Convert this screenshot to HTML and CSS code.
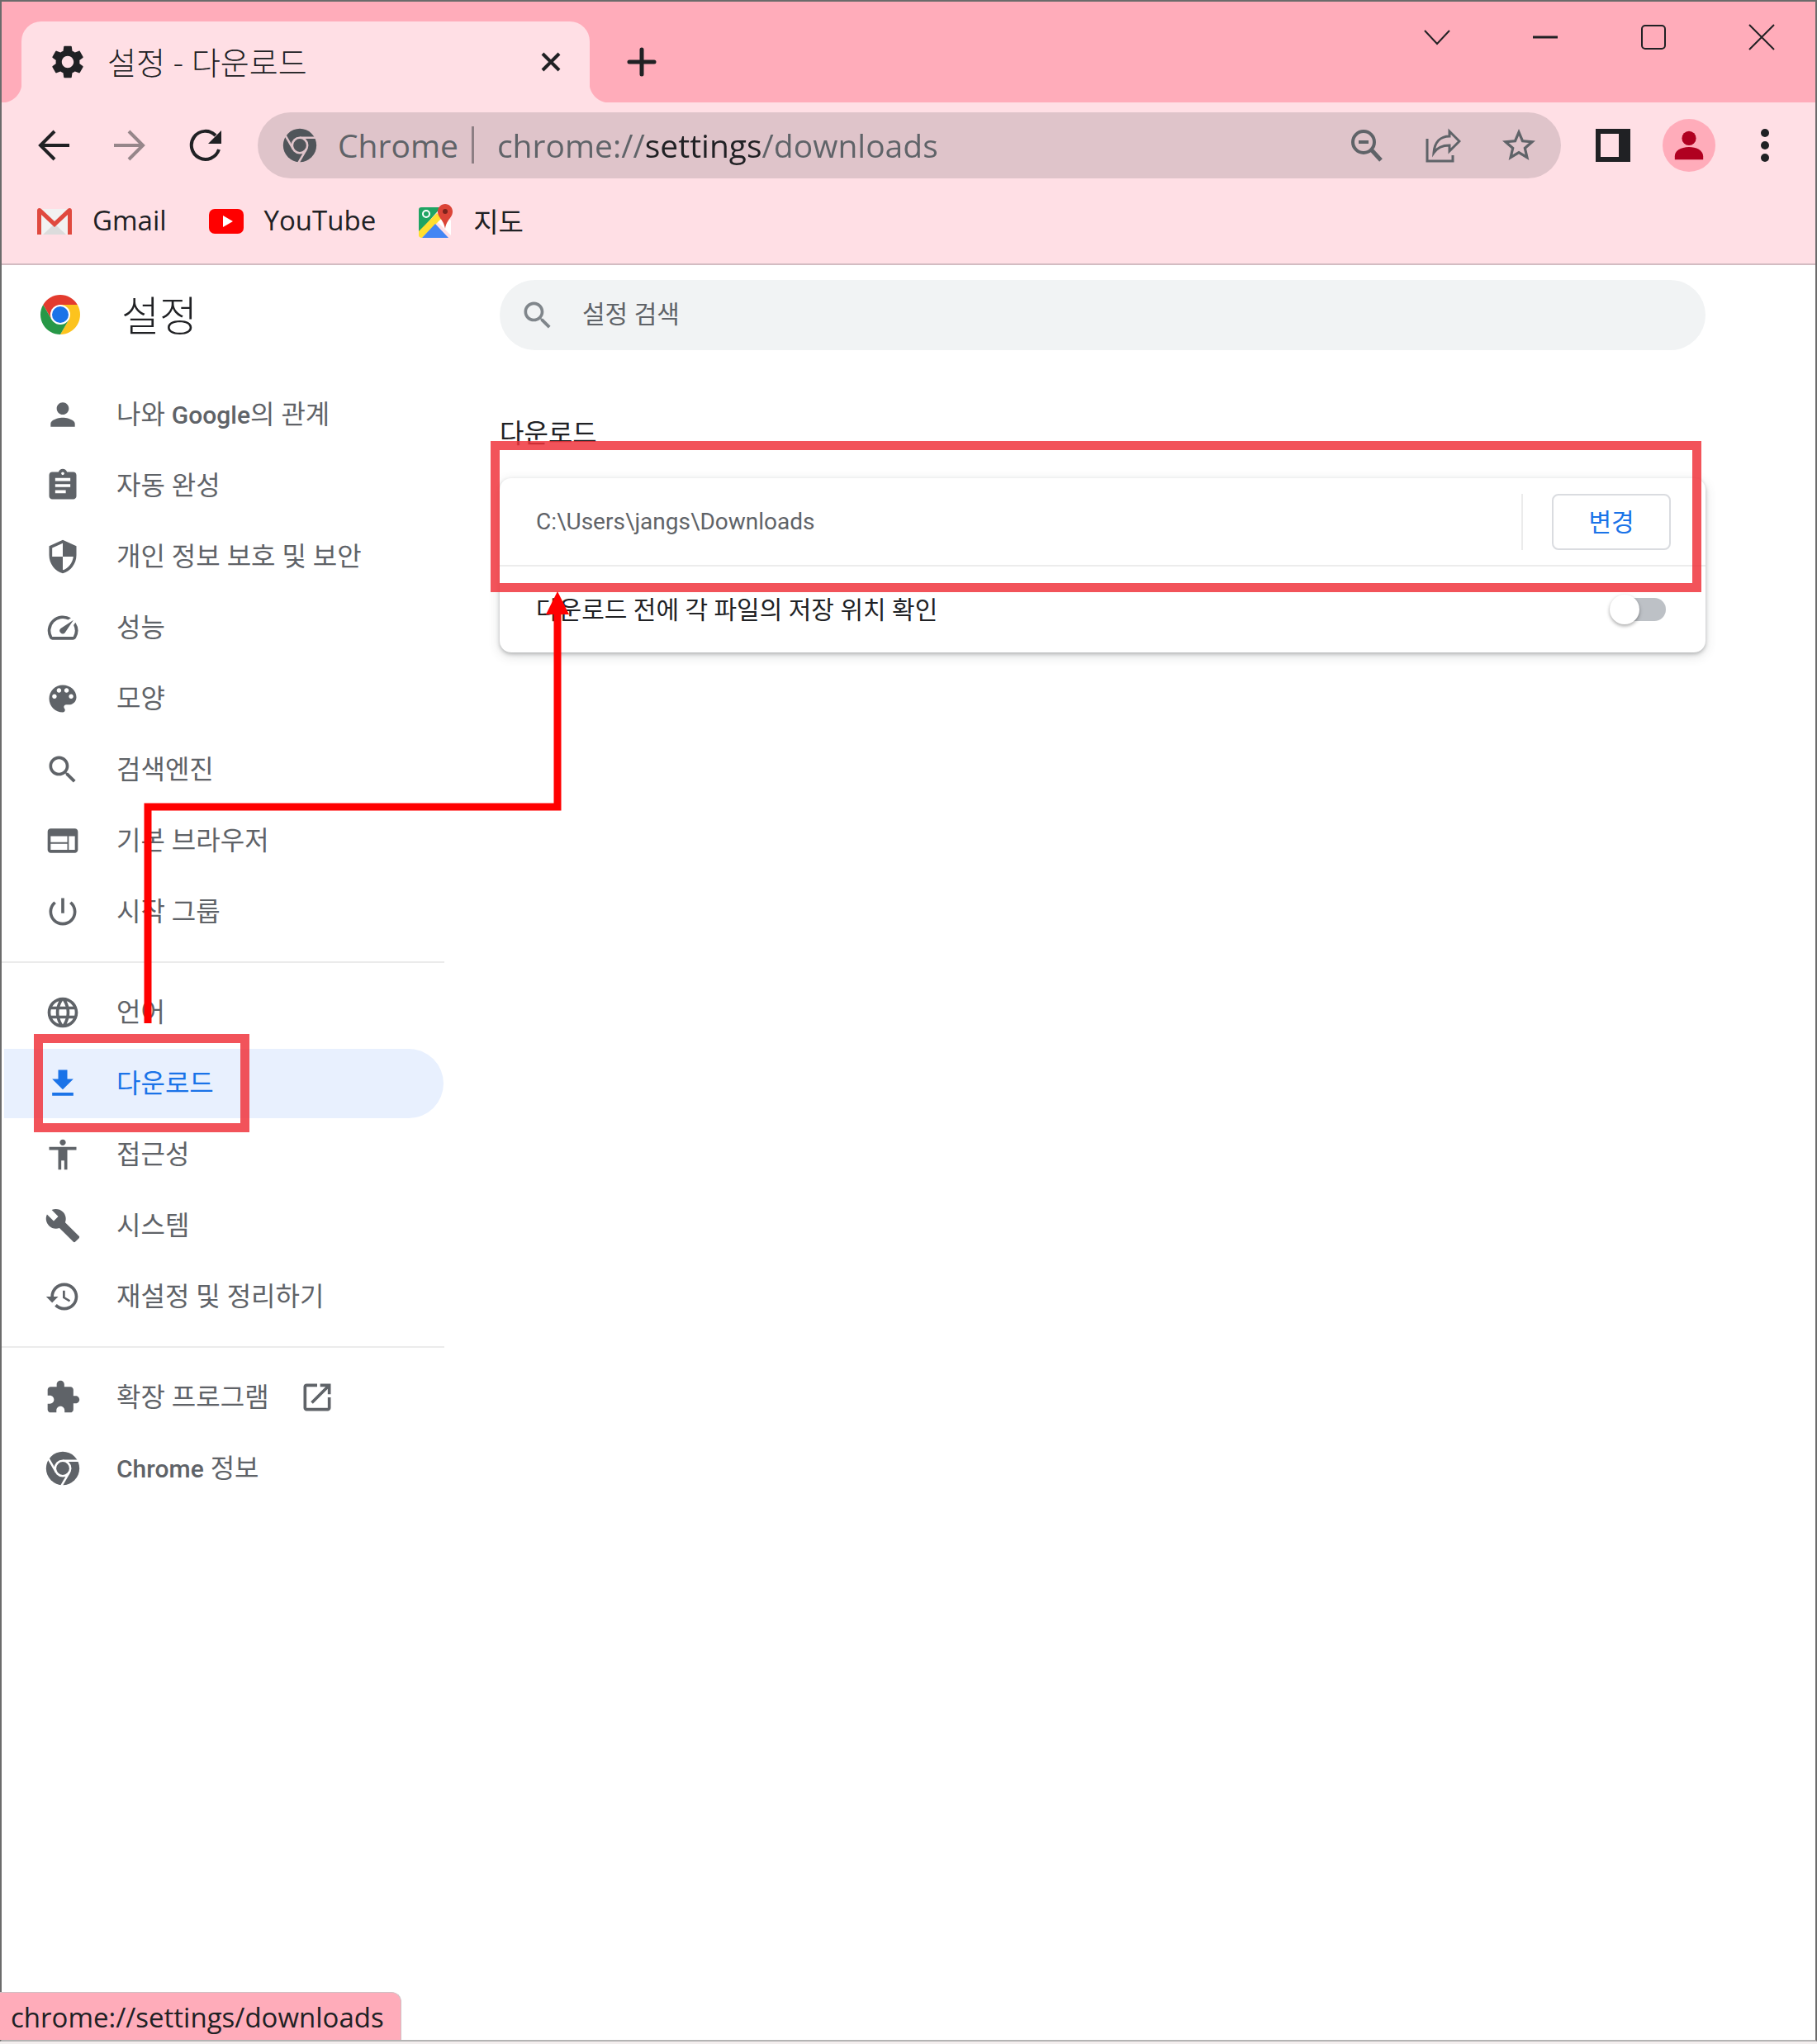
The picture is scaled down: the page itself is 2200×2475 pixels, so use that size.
FILE: index.html
```html
<!DOCTYPE html>
<html lang="ko">
<head>
    <meta charset="UTF-8">
    <meta name="viewport" content="width=device-width, initial-scale=1.0">
    <title>설정 - 다운로드</title>
    <link rel="stylesheet" href="styles.css">
</head>
<body>
<div class="window">
    <header class="browser">
        <div class="tabstrip">
            <div class="tab">
                <svg class="icon" viewBox="1 1 22 22"><path d="M19.14 12.94c.04-.3.06-.61.06-.94 0-.32-.02-.64-.07-.94l2.03-1.58c.18-.14.23-.41.12-.61l-1.92-3.32c-.12-.22-.37-.29-.59-.22l-2.39.96c-.5-.38-1.03-.7-1.62-.94l-.36-2.54c-.04-.24-.24-.41-.48-.41h-3.84c-.24 0-.43.17-.47.41l-.36 2.54c-.59.24-1.13.57-1.62.94l-2.39-.96c-.22-.08-.47 0-.59.22L2.74 8.87c-.12.21-.08.47.12.61l2.03 1.58c-.05.3-.09.63-.09.94s.02.64.07.94l-2.03 1.58c-.18.14-.23.41-.12.61l1.92 3.32c.12.22.37.29.59.22l2.39-.96c.5.38 1.03.7 1.62.94l.36 2.54c.05.24.24.41.48.41h3.84c.24 0 .44-.17.47-.41l.36-2.54c.59-.24 1.13-.56 1.62-.94l2.39.96c.22.08.47 0 .59-.22l1.92-3.32c.12-.22.07-.47-.12-.61l-2.01-1.58zM12 15.6c-1.98 0-3.6-1.62-3.6-3.6s1.62-3.6 3.6-3.6 3.6 1.62 3.6 3.6-1.62 3.6-3.6 3.6z"/></svg>
                <span class="tab-title">설정 - 다운로드</span>
                <button type="button" class="tab-close" aria-label="탭 닫기">
                    <svg class="icon line" viewBox="0 0 44 44" stroke-width="4"><path d="M12 12l20 20M32 12L12 32"/></svg>
                </button>
            </div>
            <button type="button" class="new-tab" aria-label="새 탭">
                <svg class="icon line" viewBox="0 0 44 44" stroke-width="5" stroke-linecap="round"><path d="M22 7v30M7 22h30"/></svg>
            </button>
            <div class="window-buttons">
                <button type="button" aria-label="탭 검색"><svg class="icon line" viewBox="0 0 44 44" stroke-width="2"><path d="M7 14l15 16 15-16"/></svg></button>
                <button type="button" aria-label="최소화"><svg class="icon line" viewBox="0 0 44 44" stroke-width="3"><path d="M7 22h30"/></svg></button>
                <button type="button" aria-label="최대화"><svg class="icon line" viewBox="0 0 44 44" stroke-width="2"><rect x="8" y="8" width="28" height="28" rx="4"/></svg></button>
                <button type="button" aria-label="닫기"><svg class="icon line" viewBox="0 0 44 44" stroke-width="2"><path d="M7 7l30 30M37 7L7 37"/></svg></button>
            </div>
        </div>

        <div class="toolbar">
            <button type="button" aria-label="뒤로"><svg class="icon line" viewBox="0 0 44 44" stroke-width="4"><path d="M41 22H6M23 5L6 22l17 17"/></svg></button>
            <button type="button" class="disabled" aria-label="앞으로"><svg class="icon line" viewBox="0 0 44 44" stroke-width="4"><path d="M3 22h35M21 5l17 17-17 17"/></svg></button>
            <button type="button" aria-label="새로고침"><svg class="icon line" viewBox="0 0 44 44" stroke-width="4"><path d="M38 27A17 17 0 1 1 34 10"/><path class="solid" d="M41 4v16H25z"/></svg></button>
            <div class="omnibox">
                <svg class="icon chrome-mono" viewBox="0 0 24 24"><circle cx="12" cy="12" r="11"/><circle class="cut" cx="12" cy="12" r="5"/><path class="cut" d="M12 7h10.4M7.67 14.5L2.5 5.5M16.33 14.5L11.1 23.5"/></svg>
                <label for="address">Chrome</label>
                <span class="omnibox-bar"></span>
                <input type="text" id="address" class="address" value="chrome://settings/downloads">
                <button type="button" aria-label="확대/축소"><svg class="icon line" viewBox="0 0 44 44" stroke-width="4"><circle cx="18" cy="18" r="13"/><path d="M12 18h12"/><path d="M28 28l11 12" stroke-width="5"/></svg></button>
                <button type="button" aria-label="공유"><svg class="icon line" viewBox="0 0 44 44" stroke-width="3"><path d="M3 14v27h31v-7"/><path d="M11 31c1-13 8-20 19-20V5l12 12-12 12v-7c-9 0-15 3-19 9z"/></svg></button>
                <button type="button" aria-label="북마크"><svg class="icon" viewBox="1 1 22 22"><path d="M22 9.24l-7.19-.62L12 2 9.19 8.63 2 9.24l5.46 4.73L5.82 21 12 17.27 18.18 21l-1.63-7.03L22 9.24zM12 15.4l-3.76 2.27 1-4.28-3.32-2.88 4.38-.38L12 6.1l1.71 4.04 4.38.38-3.32 2.88 1 4.28L12 15.4z"/></svg></button>
            </div>
            <button type="button" aria-label="측면 패널"><svg class="icon" viewBox="0 0 44 44"><path fill-rule="evenodd" d="M1 2h42v40H1zM7 8v28h22V8z"/></svg></button>
            <button type="button" aria-label="프로필"><span class="avatar"><svg class="icon" viewBox="0 0 44 44"><circle cx="22" cy="13" r="9"/><path d="M4 40v-4c0-8 9-12 18-12s18 4 18 12v4z"/></svg></span></button>
            <button type="button" aria-label="메뉴"><svg class="icon" viewBox="0 0 44 44"><circle cx="22" cy="7" r="5"/><circle cx="22" cy="22" r="5"/><circle cx="22" cy="37" r="5"/></svg></button>
        </div>

        <nav class="bookmarks">
            <a href="#gmail">
                <svg class="icon" viewBox="0 0 44 44"><path fill="#f2f2f2" d="M3 7h38v31H3z"/><path fill="#dcdcdc" d="M8 38l14-13 14 13z"/><path fill="#e04a3f" d="M1 9c0-3 3-4 5-2l16 15L38 7c2-2 5-1 5 2v29h-5V14L22 29 6 14v24H1z"/></svg>
                <span>Gmail</span></a>
            <a href="#youtube">
                <svg class="icon" viewBox="0 0 44 44"><rect fill="#f00" x="1" y="7" width="42" height="30" rx="7"/><path fill="#fff" d="M18 15l12 7-12 7z"/></svg>
                <span>YouTube</span></a>
            <a href="#maps">
                <svg class="icon" viewBox="0 0 44 44"><path fill="#1fa463" d="M5 5h24L2 36V8c0-2 1-3 3-3z"/><path fill="#fff" d="M36 16l5 5v18L24 22z"/><path fill="#ffdf30" d="M2 34L24 12l6 6L6 42c-2 0-4-1-4-3z"/><path fill="#4285f4" d="M6 42l16-17 16 17z"/><circle cx="11" cy="13" r="4" fill="none" stroke="#fff" stroke-width="2"/><path fill="#db4437" d="M34 1c5 0 9 4 9 9 0 8-7 9-9 21-2-12-9-13-9-21 0-5 4-9 9-9z"/><circle cx="34" cy="10" r="3" fill="#7b231c"/></svg>
                <span>지도</span></a>
        </nav>
    </header>

    <div class="settings">
        <aside class="sidebar">
            <h1>
                <svg class="logo" viewBox="0 0 24 24"><path fill="#e33b2e" d="M1.61 6A12 12 0 0 1 22.39 6H12L6.8 15z"/><path fill="#fcc31e" d="M22.39 6A12 12 0 0 1 12 24l5.2-9L12 6z"/><path fill="#279847" d="M12 24A12 12 0 0 1 1.61 6L6.8 15h10.4z"/><circle cx="12" cy="12" r="6" fill="#fff"/><circle cx="12" cy="12" r="5" fill="#1a73e8"/></svg>
                <span>설정</span>
            </h1>
            <nav>
                <ul>
                    <li><a href="#people"><svg class="icon" viewBox="0 0 24 24"><path d="M12 12c2.21 0 4-1.79 4-4s-1.79-4-4-4-4 1.79-4 4 1.79 4 4 4zm0 2c-2.67 0-8 1.34-8 4v2h16v-2c0-2.66-5.33-4-8-4z"/></svg><span>나와 <b>Google</b>의 관계</span></a></li>
                    <li><a href="#autofill"><svg class="icon" viewBox="0 0 24 24"><path d="M19 3h-4.18C14.4 1.84 13.3 1 12 1c-1.3 0-2.4.84-2.82 2H5c-1.1 0-2 .9-2 2v14c0 1.1.9 2 2 2h14c1.1 0 2-.9 2-2V5c0-1.1-.9-2-2-2zm-7 0c.55 0 1 .45 1 1s-.45 1-1 1-1-.45-1-1 .45-1 1-1zm2 14H7v-2h7v2zm3-4H7v-2h10v2zm0-4H7V7h10v2z"/></svg><span>자동 완성</span></a></li>
                    <li><a href="#privacy"><svg class="icon" viewBox="0 0 24 24"><path d="M12 1L3 5v6c0 5.55 3.84 10.74 9 12 5.16-1.26 9-6.45 9-12V5l-9-4zm0 10.99h7c-.53 4.12-3.28 7.79-7 8.94V12H5V6.3l7-3.11v8.8z"/></svg><span>개인 정보 보호 및 보안</span></a></li>
                    <li><a href="#performance"><svg class="icon" viewBox="0 0 24 24"><path d="M20.38 8.57l-1.23 1.85a8 8 0 0 1-.22 7.58H5.07A8 8 0 0 1 15.58 6.85l1.85-1.23A10 10 0 0 0 3.35 19a2 2 0 0 0 1.72 1h13.85a2 2 0 0 0 1.74-1 10 10 0 0 0-.27-10.44zM10.59 15.41a2 2 0 0 0 2.83 0l5.66-8.49-8.49 5.66a2 2 0 0 0 0 2.83z"/></svg><span>성능</span></a></li>
                    <li><a href="#appearance"><svg class="icon" viewBox="0 0 24 24"><path d="M12 3c-4.97 0-9 4.03-9 9s4.03 9 9 9c.83 0 1.5-.67 1.5-1.5 0-.39-.15-.74-.39-1.01-.23-.26-.38-.61-.38-.99 0-.83.67-1.5 1.5-1.5H16c2.76 0 5-2.24 5-5 0-4.42-4.03-8-9-8zm-5.5 9c-.83 0-1.5-.67-1.5-1.5S5.67 9 6.5 9 8 9.67 8 10.5 7.33 12 6.5 12zm3-4C8.67 8 8 7.33 8 6.5S8.67 5 9.5 5s1.5.67 1.5 1.5S10.33 8 9.5 8zm5 0c-.83 0-1.5-.67-1.5-1.5S13.67 5 14.5 5s1.5.67 1.5 1.5S15.33 8 14.5 8zm3 4c-.83 0-1.5-.67-1.5-1.5S16.67 9 17.5 9s1.5.67 1.5 1.5-.67 1.5-1.5 1.5z"/></svg><span>모양</span></a></li>
                    <li><a href="#search"><svg class="icon" viewBox="0 0 24 24"><path d="M15.5 14h-.79l-.28-.27C15.41 12.59 16 11.11 16 9.5 16 5.91 13.09 3 9.5 3S3 5.91 3 9.5 5.91 16 9.5 16c1.61 0 3.09-.59 4.23-1.57l.27.28v.79l5 4.99L20.49 19l-4.99-5zm-6 0C7.01 14 5 11.99 5 9.5S7.01 5 9.5 5 14 7.01 14 9.5 11.99 14 9.5 14z"/></svg><span>검색엔진</span></a></li>
                    <li><a href="#browser"><svg class="icon" viewBox="0 0 24 24"><path d="M20 4H4c-1.1 0-1.99.9-1.99 2L2 18c0 1.1.9 2 2 2h16c1.1 0 2-.9 2-2V6c0-1.1-.9-2-2-2zm-5 14H4v-4h11v4zm0-5H4V9h11v4zm5 5h-4V9h4v9z"/></svg><span>기본 브라우저</span></a></li>
                    <li><a href="#startup"><svg class="icon" viewBox="0 0 24 24"><path d="M13 3h-2v10h2V3zm4.83 2.17l-1.42 1.42C17.99 7.86 19 9.81 19 12c0 3.87-3.13 7-7 7s-7-3.13-7-7c0-2.19 1.01-4.14 2.58-5.42L6.17 5.17C4.23 6.82 3 9.26 3 12c0 4.97 4.03 9 9 9s9-4.03 9-9c0-2.74-1.23-5.18-3.17-6.83z"/></svg><span>시작 그룹</span></a></li>
                </ul>
                <ul>
                    <li><a href="#languages"><svg class="icon" viewBox="0 0 24 24"><path d="M11.99 2C6.47 2 2 6.48 2 12s4.47 10 9.99 10C17.52 22 22 17.52 22 12S17.52 2 11.99 2zm6.93 6h-2.95c-.32-1.25-.78-2.45-1.38-3.56 1.84.63 3.37 1.91 4.33 3.56zM12 4.04c.83 1.2 1.48 2.53 1.91 3.96h-3.82c.43-1.43 1.08-2.76 1.91-3.96zM4.26 14C4.1 13.36 4 12.69 4 12s.1-1.36.26-2h3.38c-.08.66-.14 1.32-.14 2 0 .68.06 1.34.14 2H4.26zm.82 2h2.95c.32 1.25.78 2.45 1.38 3.56-1.84-.63-3.37-1.9-4.33-3.56zm2.95-8H5.08c.96-1.66 2.49-2.93 4.33-3.56C8.81 5.55 8.35 6.75 8.03 8zM12 19.96c-.83-1.2-1.48-2.53-1.91-3.96h3.82c-.43 1.43-1.08 2.76-1.91 3.96zM14.34 14H9.66c-.09-.66-.16-1.32-.16-2 0-.68.07-1.35.16-2h4.68c.09.65.16 1.32.16 2 0 .68-.07 1.34-.16 2zm.25 5.56c.6-1.11 1.06-2.31 1.38-3.56h2.95c-.96 1.65-2.49 2.93-4.33 3.56zM16.36 14c.08-.66.14-1.32.14-2 0-.68-.06-1.34-.14-2h3.38c.16.64.26 1.31.26 2s-.1 1.36-.26 2h-3.38z"/></svg><span>언어</span></a></li>
                    <li><a href="#downloads" class="selected"><svg class="icon" viewBox="0 0 24 24"><path d="M19 9h-4V3H9v6H5l7 7 7-7zM5 18v2h14v-2H5z"/></svg><span>다운로드</span></a><div class="mark mark-menu"></div></li>
                    <li><a href="#accessibility"><svg class="icon" viewBox="0 0 24 24"><path d="M12 2c1.1 0 2 .9 2 2s-.9 2-2 2-2-.9-2-2 .9-2 2-2zm9 7h-6v13h-2v-6h-2v6H9V9H3V7h18v2z"/></svg><span>접근성</span></a></li>
                    <li><a href="#system"><svg class="icon" viewBox="0 0 24 24"><path d="M22.7 19l-9.1-9.1c.9-2.3.4-5-1.5-6.9-2-2-5-2.4-7.4-1.3L9 6 6 9 1.6 4.7C.4 7.1.9 10.1 2.9 12.1c1.9 1.9 4.6 2.4 6.9 1.5l9.1 9.1c.4.4 1 .4 1.4 0l2.3-2.3c.5-.4.5-1.1.1-1.4z"/></svg><span>시스템</span></a></li>
                    <li><a href="#reset"><svg class="icon" viewBox="0 0 24 24"><path d="M13 3c-4.97 0-9 4.03-9 9H1l3.89 3.89.07.14L9 12H6c0-3.87 3.13-7 7-7s7 3.13 7 7-3.13 7-7 7c-1.93 0-3.68-.79-4.94-2.06l-1.42 1.42C8.27 19.99 10.51 21 13 21c4.97 0 9-4.03 9-9s-4.03-9-9-9zm-1 5v5l4.28 2.54.72-1.21-3.5-2.08V8H12z"/></svg><span>재설정 및 정리하기</span></a></li>
                </ul>
                <ul>
                    <li><a href="#extensions"><svg class="icon" viewBox="0 0 24 24"><path d="M20.5 11H19V7c0-1.1-.9-2-2-2h-4V3.5C13 2.12 11.88 1 10.5 1S8 2.12 8 3.5V5H4c-1.1 0-1.99.9-1.99 2v3.8H3.5c1.49 0 2.7 1.21 2.7 2.7s-1.21 2.7-2.7 2.7H2V20c0 1.1.9 2 2 2h3.8v-1.5c0-1.49 1.21-2.7 2.7-2.7 1.49 0 2.7 1.21 2.7 2.7V22H17c1.1 0 2-.9 2-2v-4h1.5c1.38 0 2.5-1.12 2.5-2.5S21.88 11 20.5 11z"/></svg><span>확장 프로그램</span><svg class="icon external" viewBox="0 0 24 24"><path d="M19 19H5V5h7V3H5c-1.11 0-2 .9-2 2v14c0 1.1.89 2 2 2h14c1.1 0 2-.9 2-2v-7h-2v7zM14 3v2h3.59l-9.83 9.83 1.41 1.41L19 6.41V10h2V3h-7z"/></svg></a></li>
                    <li><a href="#about"><svg class="icon chrome-mono" viewBox="0 0 24 24"><circle cx="12" cy="12" r="11"/><circle class="cut" cx="12" cy="12" r="5"/><path class="cut" d="M12 7h10.4M7.67 14.5L2.5 5.5M16.33 14.5L11.1 23.5"/></svg><span><b>Chrome</b> 정보</span></a></li>
                </ul>
            </nav>
        </aside>

        <main>
            <div class="search">
                <svg class="icon" viewBox="0 0 24 24"><path d="M15.5 14h-.79l-.28-.27C15.41 12.59 16 11.11 16 9.5 16 5.91 13.09 3 9.5 3S3 5.91 3 9.5 5.91 16 9.5 16c1.61 0 3.09-.59 4.23-1.57l.27.28v.79l5 4.99L20.49 19l-4.99-5zm-6 0C7.01 14 5 11.99 5 9.5S7.01 5 9.5 5 14 7.01 14 9.5 11.99 14 9.5 14z"/></svg>
                <input type="text" id="search" placeholder="설정 검색" aria-label="설정 검색">
            </div>
            <h2>다운로드</h2>
            <section class="card">
                <div class="row">
                    <span class="path">C:\Users\jangs\Downloads</span>
                    <span class="separator"></span>
                    <button type="button" class="change">변경</button>
                </div>
                <div class="row">
                    <label for="ask">다운로드 전에 각 파일의 저장 위치 확인</label>
                    <input type="checkbox" id="ask" class="toggle">
                </div>
                <div class="mark mark-card"></div>
            </section>
        </main>

        <!-- flecha del menú a la carpeta -->
        <svg class="arrow" viewBox="0 0 516 524"><path d="M5 523V261h496V20" fill="none" stroke="#f00" stroke-width="9"/><path d="M501 0l14 28h-28z" fill="#f00"/></svg>
    </div>
    <div class="status">chrome://settings/downloads</div>
</div>
</body>
</html>
```

FILE: styles.css
```css
* {
    box-sizing: border-box;
}
body {
    margin: 0;
    background-color: #f3eeee;
    font-family: Roboto, "Noto Sans CJK KR", sans-serif;
    font-size: 32px;
    color: #202124;
}
button {
    display: flex;
    align-items: center;
    justify-content: center;
    padding: 0;
    border: none;
    background: none;
    color: inherit;
    font: inherit;
    cursor: pointer;
}
a {
    color: inherit;
    text-decoration: none;
}
.icon {
    width: 44px;
    height: 44px;
    flex: none;
    fill: currentColor;
}
.line {
    fill: none;
    stroke: currentColor;
}
.line .solid {
    fill: currentColor;
    stroke: none;
}
.chrome-mono {
    --cut: #ffffff;
}
.chrome-mono .cut {
    fill: none;
    stroke: var(--cut);
    stroke-width: 1.4;
}
.window {
    position: relative;
    display: flex;
    flex-direction: column;
    min-height: calc(100vh - 3px);
    background-color: #ffffff;
    border: 2px solid #6b6b6b;
    border-bottom-color: #b4b4b4;
}

/* Browser */
.browser {
    background-color: #ffdfe5;
    border-bottom: 2px solid #d3bcc2;
    font-family: "Open Sans", "Noto Sans CJK KR", sans-serif;
}
.tabstrip {
    display: flex;
    height: 122px;
    padding-left: 24px;
    background-color: #ffacba;
}
.tab {
    position: relative;
    display: flex;
    align-items: center;
    width: 688px;
    margin-top: 24px;
    padding: 0 25px 0 34px;
    gap: 26px;
    background-color: #ffdfe5;
    border-radius: 24px 24px 0 0;
}
.tab::before,
.tab::after {
    content: "";
    position: absolute;
    bottom: 0;
    width: 24px;
    height: 24px;
}
.tab::before {
    right: 100%;
    background: radial-gradient(circle at 0 0, #ffacba 24px, #ffdfe5 25px);
}
.tab::after {
    left: 100%;
    background: radial-gradient(circle at 100% 0, #ffacba 24px, #ffdfe5 25px);
}
.tab-title {
    flex: 1;
    padding-bottom: 4px;
    font-size: 38px;
    font-weight: 300;
}
.new-tab {
    width: 126px;
    margin-top: 24px;
}
.window-buttons {
    display: flex;
    margin-left: auto;
}
.window-buttons button {
    width: 131px;
    height: 86px;
}
.toolbar {
    display: flex;
    align-items: center;
    height: 103px;
    padding: 0 15px 0 17px;
}
.toolbar button {
    flex: none;
    width: 92px;
    height: 80px;
}
.toolbar .disabled {
    color: #96868a;
}
.omnibox {
    flex: 1;
    display: flex;
    align-items: center;
    height: 80px;
    margin: 0 17px;
    padding: 0 5px 0 29px;
    border-radius: 40px;
    background-color: #dfc4ca;
    color: #5f6368;
    font-size: 39px;
}
.omnibox .chrome-mono {
    --cut: #dfc4ca;
    margin-right: 24px;
    color: #50555a;
}
.omnibox-bar {
    width: 3px;
    height: 45px;
    margin: 0 28px 0 16px;
    background-color: #8d7f84;
}
.address {
    flex: 1;
    min-width: 0;
    padding: 0;
    border: none;
    outline: none;
    font: inherit;
    color: #5f6368;
    /* host darker than the rest of the url */
    background: linear-gradient(90deg, #5f6368 178px, #202124 178px, #202124 320px, #5f6368 320px);
    background-clip: text;
    -webkit-background-clip: text;
    -webkit-text-fill-color: transparent;
}
.avatar {
    display: flex;
    align-items: center;
    justify-content: center;
    width: 64px;
    height: 64px;
    border-radius: 50%;
    background-color: #ffacba;
    color: #b00020;
}
.avatar .icon {
    width: 42px;
    height: 42px;
}
.bookmarks {
    display: flex;
    height: 92px;
    padding: 0 42px 10px;
    gap: 50px;
    font-size: 33px;
}
.bookmarks a {
    display: flex;
    align-items: center;
    gap: 24px;
}
.bookmarks span {
    padding-bottom: 3px;
}

/* Settings */
.settings {
    position: relative;
    flex: 1;
    display: flex;
}
.sidebar {
    width: 536px;
    color: #5f6368;
}
h1 {
    display: flex;
    align-items: center;
    gap: 50px;
    height: 120px;
    margin: 0 0 18px;
    padding-left: 47px;
    color: #202124;
    font-size: 50px;
    font-weight: 300;
}
h1 span {
    padding-bottom: 4px;
}
.logo {
    width: 48px;
    height: 48px;
}
.sidebar ul {
    margin: 0;
    padding: 0;
    list-style: none;
}
.sidebar ul + ul {
    margin-top: 17px;
    padding-top: 17px;
    border-top: 2px solid #ebebeb;
}
.sidebar li {
    position: relative;
    padding: 1px 1px 1px 3px;
}
.sidebar a {
    display: flex;
    align-items: center;
    height: 84px;
    padding-left: 49px;
    border-radius: 0 42px 42px 0;
}
.sidebar a span {
    margin-left: 43px;
    padding-bottom: 6px;
}
.sidebar b {
    font-size: 30px;
    font-weight: 500;
}
.sidebar .selected {
    background-color: #e8f0fe;
    color: #1a73e8;
}
.sidebar .external {
    margin-left: 36px;
}
main {
    flex: 1;
    padding: 18px 133px 0 67px;
    font-size: 30px;
}
.search {
    display: flex;
    align-items: center;
    gap: 32px;
    height: 85px;
    padding: 0 24px;
    border-radius: 43px;
    background-color: #f1f3f4;
    color: #80868b;
}
.search input {
    flex: 1;
    padding: 0 0 3px;
    border: none;
    outline: none;
    background: none;
    font: inherit;
}
.search input::placeholder {
    color: #5f6368;
}
h2 {
    margin: 77px 0 30px;
    font-size: 32px;
    font-weight: 400;
    line-height: 48px;
}
.card {
    position: relative;
    border-radius: 14px;
    box-shadow: 0 2px 4px rgba(60, 64, 67, .3), 0 4px 14px rgba(60, 64, 67, .18);
}
.row {
    display: flex;
    align-items: center;
    height: 105px;
    padding: 0 42px 0 44px;
}
.row + .row {
    height: 106px;
    border-top: 2px solid #ececec;
}
.path,
.row label {
    flex: 1;
}
.row label {
    padding-bottom: 4px;
}
.path {
    color: #5f6368;
    font-size: 28px;
}
.separator {
    width: 2px;
    height: 68px;
    margin-right: 35px;
    background-color: #ebebeb;
}
.change {
    width: 144px;
    height: 68px;
    padding-bottom: 4px;
    border: 2px solid #dadce0;
    border-radius: 8px;
    color: #1a73e8;
}
.toggle {
    appearance: none;
    position: relative;
    width: 62px;
    height: 28px;
    margin: 0 6px 0 0;
    border-radius: 14px;
    background-color: #bdc1c6;
}
.toggle::before {
    content: "";
    position: absolute;
    top: -4px;
    left: -6px;
    width: 36px;
    height: 36px;
    border-radius: 50%;
    background-color: #ffffff;
    box-shadow: 0 2px 4px rgba(0, 0, 0, .35);
}

/* Marks over the page */
.mark {
    position: absolute;
    border: 11px solid rgba(240, 50, 58, .84);
    pointer-events: none;
}
.mark-menu {
    top: -17px;
    left: 39px;
    width: 261px;
    height: 119px;
}
.mark-card {
    top: -45px;
    left: -11px;
    right: 5px;
    height: 183px;
}
.arrow {
    position: absolute;
    top: 395px;
    left: 172px;
    width: 516px;
    height: 524px;
    overflow: visible;
    pointer-events: none;
}
.status {
    position: absolute;
    left: -2px;
    bottom: 0;
    height: 58px;
    padding: 0 20px 0 13px;
    border-top: 1px solid #d0c0c4;
    border-right: 1px solid #d0c0c4;
    border-radius: 0 12px 0 0;
    background-color: #ffacba;
    font-family: "Open Sans", sans-serif;
    font-size: 33px;
    line-height: 60px;
}
```
